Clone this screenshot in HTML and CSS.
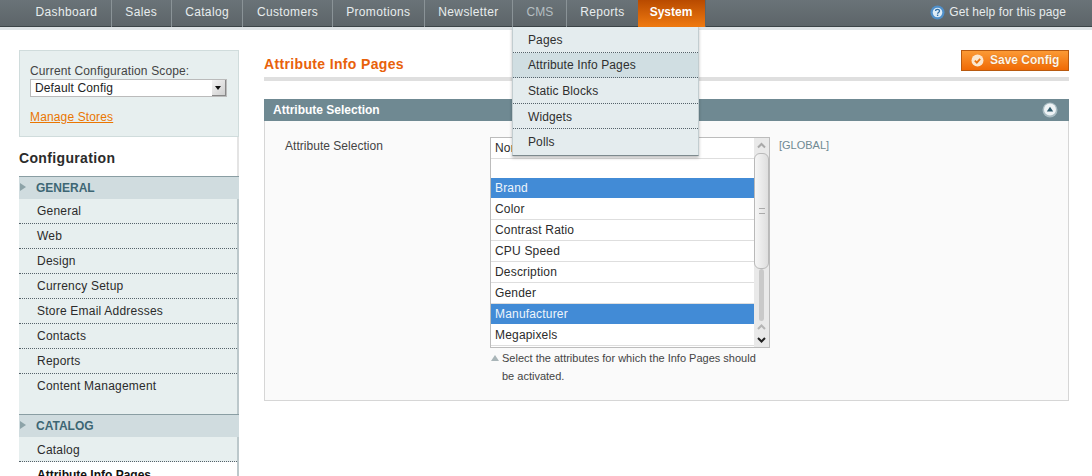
FILE: index.html
```html
<!DOCTYPE html>
<html lang="en">
<head>
  <meta charset="UTF-8">
  <title>Configuration</title>
  <link rel="stylesheet" href="styles.css">
</head>
<body>
<div class="nav">
  <ul class="nav-list">
    <li class="nav-item">Dashboard</li>
    <li class="nav-item">Sales</li>
    <li class="nav-item">Catalog</li>
    <li class="nav-item">Customers</li>
    <li class="nav-item">Promotions</li>
    <li class="nav-item">Newsletter</li>
    <li class="nav-item nav-dim">CMS</li>
    <li class="nav-item nav-plain">Reports</li>
    <li class="nav-item nav-active">System</li>
  </ul>
  <div class="help">
    <svg class="help-icon" width="15" height="15" viewBox="0 0 15 15">
      <circle cx="7.5" cy="7.5" r="7" fill="#4f8fc9"/>
      <circle cx="7.5" cy="7.5" r="4.8" fill="#dcebf6"/>
      <path d="M5.6 6.1c0-2.3 3.9-2.3 3.9 0 0 1.4-1.9 1.3-1.9 2.6" fill="none" stroke="#2f6ea6" stroke-width="1.3"/>
      <rect x="6.9" y="9.6" width="1.4" height="1.4" fill="#2f6ea6"/>
    </svg>
    Get help for this page
  </div>
  <ul class="dropdown">
    <li>Pages</li>
    <li class="dropdown-on">Attribute Info Pages</li>
    <li>Static Blocks</li>
    <li>Widgets</li>
    <li>Polls</li>
  </ul>
</div>

<div class="page">
  <div class="side">
    <div class="scope">
      <div class="scope-label">Current Configuration Scope:</div>
      <div class="scope-select">
        <span>Default Config</span>
        <span class="scope-arrow"></span>
      </div>
      <a class="scope-link" href="#">Manage Stores</a>
    </div>
    <h3 class="side-title">Configuration</h3>
    <div class="side-head">GENERAL</div>
    <ul class="side-list side-list-pad">
      <li>General</li>
      <li>Web</li>
      <li>Design</li>
      <li>Currency Setup</li>
      <li>Store Email Addresses</li>
      <li>Contacts</li>
      <li>Reports</li>
      <li>Content Management</li>
    </ul>
    <div class="side-head">CATALOG</div>
    <ul class="side-list side-list-low">
      <li>Catalog</li>
      <li class="side-current">Attribute Info Pages</li>
    </ul>
  </div>

  <div class="main">
    <div class="main-head">
      <h3 class="main-title">Attribute Info Pages</h3>
      <button class="save">
        <svg width="13" height="13" viewBox="0 0 13 13">
          <circle cx="6.5" cy="6.5" r="6" fill="#fbe7cf"/>
          <path d="M3.8 6.6l2 2 3.4-3.8" fill="none" stroke="#e8730f" stroke-width="1.8"/>
        </svg>
        Save Config
      </button>
    </div>

    <div class="section-head">
      <span>Attribute Selection</span>
      <svg width="16" height="16" viewBox="0 0 16 16">
        <circle cx="8" cy="8" r="7.5" fill="#a9bcc2"/>
        <circle cx="8" cy="7.5" r="6" fill="#eef3f5"/>
        <path d="M4.8 9.6L8 4.8l3.2 4.8z" fill="#2e5a6b"/>
      </svg>
    </div>
    <div class="section-body">
      <div class="field-label">Attribute Selection</div>
      <div class="field-value">
        <div class="listbox">
          <ul class="options">
            <li>None</li>
            <li class="blank"></li>
            <li class="picked">Brand</li>
            <li>Color</li>
            <li>Contrast Ratio</li>
            <li>CPU Speed</li>
            <li>Description</li>
            <li>Gender</li>
            <li class="picked">Manufacturer</li>
            <li>Megapixels</li>
          </ul>
          <div class="scrollbar">
            <svg class="scroll-arrow" width="15" height="15" viewBox="0 0 15 15"><path d="M4 9.5l3.5-3.5 3.5 3.5" fill="none" stroke="#a9a9a9" stroke-width="2"/></svg>
            <div class="scroll-thumb"><span class="scroll-grip"></span></div>
            <div class="scroll-track"></div>
            <svg class="scroll-arrow" width="15" height="13" viewBox="0 0 15 13"><path d="M4 8l3.5-3.5L11 8" fill="none" stroke="#b5b5b5" stroke-width="2"/></svg>
            <svg class="scroll-arrow" width="15" height="13" viewBox="0 0 15 13"><path d="M4 4l3.5 3.5L11 4" fill="none" stroke="#222" stroke-width="2"/></svg>
          </div>
        </div>
        <p class="note">Select the attributes for which the Info Pages should be activated.</p>
      </div>
      <div class="scope-tag">[GLOBAL]</div>
    </div>
  </div>
</div>
</body>
</html>
```

FILE: styles.css
```css
* {
  box-sizing: border-box;
}

html, body {
  height: 476px;
  overflow: hidden;
}

body {
  margin: 0;
  background: #fff;
  font-family: "Liberation Sans", Arial, sans-serif;
  font-size: 12px;
  letter-spacing: .22px;
  color: #2f2f2f;
}

ul {
  list-style: none;
  margin: 0;
  padding: 0;
}

/* top bar */
.nav {
  position: relative;
  display: flex;
  justify-content: space-between;
  height: 30px;
  background: linear-gradient(#6a7378, #5c6468);
  border-bottom: 3px solid #dfe4e6;
  box-shadow: inset 0 -1px 0 #3c4447;
  z-index: 5;
}

.nav-list {
  display: flex;
  padding-left: 22px;
  letter-spacing: .35px;
}

.nav-item {
  height: 27px;
  padding: 0 13.5px;
  line-height: 25px;
  color: #e8edee;
  border-right: 1px solid #8a9397;
}

.nav-dim {
  padding-right: 12.5px;
  letter-spacing: 0;
  color: #b5bec2;
}

.nav-plain {
  padding-right: 13px;
  border-right: 0;
}

.nav-active {
  padding: 0 13px 0 12px;
  background: linear-gradient(#b84a00, #f07a10);
  color: #fff;
  font-weight: bold;
  letter-spacing: 0;
  border-right: 1px solid #5c6468;
}

.help {
  display: flex;
  align-items: center;
  gap: 4px;
  height: 24px;
  padding-right: 26px;
  letter-spacing: .09px;
  color: #e6ebed;
}

.dropdown {
  position: absolute;
  top: 27px;
  left: 512px;
  width: 187px;
  letter-spacing: .12px;
  background: #e4ecee;
  border: 1px solid #c2cdd0;
  border-top: 0;
  border-bottom: 1px solid #7d8a8e;
  box-shadow: 0 2px 3px rgba(0, 0, 0, .25);
}

.dropdown li {
  height: 25.5px;
  padding-left: 15px;
  line-height: 26px;
  border-bottom: 1px dotted #55626a;
}

.dropdown .dropdown-on {
  background: #d0dee2;
  line-height: 25px;
}

.dropdown li:last-child {
  border-bottom: 0;
}

/* page columns */
.page {
  display: flex;
  align-items: flex-start;
  padding: 20px 23px 0 19px;
}

.side {
  flex: none;
  width: 220px;
  margin-right: 25px;
}

.scope {
  height: 87px;
  padding: 13px 10px 0;
  letter-spacing: .14px;
  background: #e7efef;
  border: 1px solid #d0dcdc;
}

.scope-label {
  line-height: 14px;
  color: #444;
}

.scope-select {
  display: flex;
  justify-content: space-between;
  align-items: center;
  width: 197px;
  height: 18px;
  margin-top: 1px;
  padding-left: 4px;
  background: #fff;
  border: 1px solid #bbb;
  color: #222;
}

.scope-arrow {
  width: 14px;
  height: 16px;
  background: linear-gradient(135deg, #f4f4f4, #cfcfcf);
  border-right: 1px solid #888;
  border-bottom: 1px solid #888;
  position: relative;
}

.scope-arrow::after {
  content: "";
  position: absolute;
  top: 6px;
  left: 3px;
  border: 3.5px solid transparent;
  border-top: 4px solid #111;
}

.scope-link {
  display: block;
  margin-top: 13px;
  color: #ea7601;
}

.side-title {
  height: 39px;
  margin: 0;
  padding-top: 13px;
  font-size: 14px;
  letter-spacing: .35px;
  color: #2b2b2b;
  border-right: 2px solid #e4e4e4;
}

.side-head {
  height: 23px;
  padding-left: 17px;
  line-height: 22px;
  font-weight: bold;
  letter-spacing: 0;
  color: #3d6674;
  background: #d0dcdf;
  border-top: 1px solid #8a9ea3;
  position: relative;
}

.side-head::before {
  content: "";
  position: absolute;
  top: 6px;
  left: 1px;
  border: 4px solid transparent;
  border-left: 6px solid #8da3a8;
}

.side-list {
  background: #e7efef;
  border-right: 2px solid #bcc8cb;
}

.side-list-pad {
  padding-bottom: 16px;
}

.side-list li {
  height: 25px;
  padding-left: 18px;
  line-height: 24px;
  color: #2b2b2b;
  border-bottom: 1px dotted #55626a;
}

.side-list-pad li:last-child {
  border-bottom: 0;
  height: 24px;
}

.side-list-low li {
  line-height: 26px;
}

.side-list .side-current {
  background: #fff;
  font-weight: bold;
  letter-spacing: 0;
  color: #111;
  line-height: 26px;
  border-bottom: 0;
}

/* main column */
.main {
  flex: 1;
}

.main-head {
  display: flex;
  justify-content: space-between;
  height: 31px;
  border-bottom: 4px solid #dfdfdf;
}

.main-title {
  margin: 0;
  padding-top: 6px;
  font-size: 14px;
  letter-spacing: .35px;
  color: #e8610a;
}

.save {
  display: flex;
  align-items: center;
  gap: 6px;
  height: 21px;
  width: 108px;
  padding: 0 0 1px 9px;
  font-family: inherit;
  font-size: 12px;
  font-weight: bold;
  letter-spacing: 0;
  color: #fff6e8;
  background: linear-gradient(#fb9a35, #f06a05);
  border: 1px solid #b85a10;
  text-shadow: 0 0 1px #b85a10;
}

.section-head {
  display: flex;
  justify-content: space-between;
  align-items: center;
  height: 22px;
  margin-top: 18px;
  padding: 0 11px 0 9px;
  font-weight: bold;
  letter-spacing: 0;
  color: #fff;
  background: #6f8992;
}

.section-body {
  display: flex;
  align-items: flex-start;
  height: 280px;
  padding: 16px 0 0 20px;
  background: #fafafa;
  border: 1px solid #d6d6d6;
  border-top: 0;
}

.field-label {
  flex: none;
  width: 205px;
  line-height: 18px;
  letter-spacing: .03px;
  color: #444;
}

.field-value {
  flex: none;
  width: 280px;
}

.listbox {
  display: flex;
  height: 211px;
  overflow: hidden;
  background: #fff;
  border: 1px solid #bcbcbc;
}

.options {
  flex: 1;
  letter-spacing: .18px;
}

.options li {
  height: 21px;
  padding-left: 4px;
  line-height: 20px;
  color: #2b2b2b;
  border-bottom: 1px solid #dedede;
}

.options .blank {
  height: 19px;
  border-bottom: 0;
}

.options .picked {
  background: #428bd6;
  color: #eef5fb;
  border-bottom-color: #fff;
}

.scrollbar {
  flex: none;
  width: 15px;
  display: flex;
  flex-direction: column;
  align-items: center;
  background: #e9e9e9;
}

.scroll-arrow {
  flex: none;
}

.scroll-thumb {
  flex: none;
  display: flex;
  align-items: center;
  justify-content: center;
  width: 15px;
  height: 116px;
  background: linear-gradient(90deg, #f6f6f6, #dedede);
  border: 1px solid #b9b9b9;
  border-radius: 6px;
}

.scroll-grip {
  width: 6px;
  height: 6px;
  border-top: 1px solid #aaa;
  border-bottom: 1px solid #aaa;
}

.scroll-track {
  flex: 1;
  width: 5px;
  background: #c9c9c9;
  border-radius: 3px;
}

.note {
  position: relative;
  margin: 1px 10px 0 0;
  padding-left: 12px;
  font-size: 11px;
  line-height: 18px;
  letter-spacing: 0;
  color: #444;
}

.note::before {
  content: "";
  position: absolute;
  top: 6px;
  left: 1px;
  border: 4px solid transparent;
  border-top: 0;
  border-bottom: 6px solid #a9b5b8;
}

.scope-tag {
  margin-left: 9px;
  font-size: 11px;
  line-height: 16px;
  letter-spacing: 0;
  color: #6f8992;
}
```
